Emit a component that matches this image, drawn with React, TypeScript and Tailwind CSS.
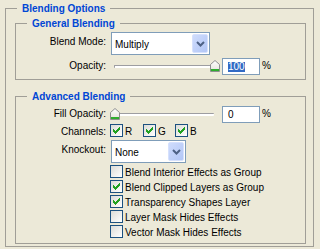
import React from "react";

const groupBox = "m-0 min-w-0 border border-[#a09e97] p-0";
const legendCls = "ml-[11px] px-[5px] font-bold text-[#0046d5]";

function CheckMark() {
  // classic 7x7 xp check, drawn pixel by pixel
  return (
    <svg width="11" height="11" viewBox="0 0 11 11" shapeRendering="crispEdges">
      <path
        transform="translate(2,2)"
        fill="#21a121"
        d="M6 0h1v1h-1z M5 1h2v1h-2z M0 2h1v1h-1z M4 2h3v1h-3z M0 3h2v1h-2z M3 3h3v1h-3z M0 4h5v1h-5z M1 5h3v1h-3z M2 6h1v1h-1z"
      />
    </svg>
  );
}

function CheckBox({ checked }: { checked: boolean }) {
  return (
    <span className="flex h-[13px] w-[13px] shrink-0 border border-[#1c5180] bg-gradient-to-br from-[#dcdcd7] to-white">
      {checked && <CheckMark />}
    </span>
  );
}

function DropDown({ value, width }: { value: string; width: string }) {
  return (
    <div className={`flex h-[23px] border border-[#7f9db9] bg-white ${width}`}>
      <div className="flex-1 pl-[3px] leading-[23px]">{value}</div>
      <div className="m-[1px] flex w-[16px] items-center justify-center rounded-[2px] border border-[#d6e1fd] bg-gradient-to-br from-[#cfdcfc] to-[#b2c6f6]">
        <svg width="9" height="6" viewBox="0 0 9 6">
          <polyline points="1,1 4.5,4.5 8,1" fill="none" stroke="#4d6185" strokeWidth="2" />
        </svg>
      </div>
    </div>
  );
}

function Slider({ value }: { value: number }) {
  return (
    <div className="relative ml-[4px] h-[17px] w-[110px]">
      <div className="absolute left-[4px] top-[7px] h-[3px] w-[100px] rounded-[1px] border-t border-l border-[#9d9da1] bg-white" />
      <svg
        className="absolute top-[2px]"
        style={{ left: value }}
        width="10"
        height="12"
        viewBox="0 0 10 12"
      >
        <defs>
          <linearGradient id={`thumb${value}`} x1="0" y1="0" x2="0" y2="1">
            <stop offset="0" stopColor="#ffffff" />
            <stop offset="1" stopColor="#e3e2da" />
          </linearGradient>
        </defs>
        <polygon
          points="0.5,11.5 0.5,4.5 5,0.5 9.5,4.5 9.5,11.5"
          fill={`url(#thumb${value})`}
          stroke="#8e8f8f"
        />
        <rect x="1" y="9" width="8" height="2" fill="#2fae2f" />
      </svg>
    </div>
  );
}

function NumberBox({ value, selected }: { value: string; selected?: boolean }) {
  return (
    <div className="ml-[2px] flex h-[17px] w-[38px] items-start border border-[#7f9db9] bg-white pl-[5px] pt-[3px]">
      <span
        className={`inline-block h-[10px] leading-[10px] ${
          selected ? "bg-[#316ac5] text-white" : ""
        }`}
      >
        {value}
      </span>
    </div>
  );
}

function Label({ text, lh }: { text: string; lh: string }) {
  return <div className={`w-[90px] shrink-0 text-right ${lh}`}>{text}</div>;
}

export default function App() {
  const options = [
    { label: "Blend Interior Effects as Group", checked: false },
    { label: "Blend Clipped Layers as Group", checked: true },
    { label: "Transparency Shapes Layer", checked: true },
    { label: "Layer Mask Hides Effects", checked: false },
    { label: "Vector Mask Hides Effects", checked: false },
  ];

  return (
    <div className="h-[249px] w-[320px] overflow-hidden bg-[#ece9d8] pl-[5px] pr-[6px] font-['Liberation_Sans',Arial,sans-serif] text-[10px] text-black">
      <fieldset className={groupBox}>
        <legend className={`${legendCls} leading-[17px]`}>Blending Options</legend>
        <div className="pb-[2px] pl-[9px] pr-[7px]">
          {/* General Blending */}
          <fieldset className={groupBox}>
            <legend className={`${legendCls} leading-[13px]`}>General Blending</legend>
            <div className="pb-[4px]">
              <div className="mt-[2px] flex h-[23px]">
                <Label text="Blend Mode:" lh="leading-[19px]" />
                <div className="ml-[5px]">
                  <DropDown value="Multiply" width="w-[99px]" />
                </div>
              </div>
              <div className="mt-[3px] flex h-[17px]">
                <Label text="Opacity:" lh="leading-[15px]" />
                <Slider value={100} />
                <NumberBox value="100" selected />
                <span className="ml-[2px] leading-[15px]">%</span>
              </div>
            </div>
          </fieldset>

          {/* Advanced Blending */}
          <fieldset className={`${groupBox} mt-[10px]`}>
            <legend className={`${legendCls} leading-[13px]`}>Advanced Blending</legend>
            <div className="pb-[3px]">
              <div className="mt-[3px] flex h-[17px]">
                <Label text="Fill Opacity:" lh="leading-[15px]" />
                <Slider value={0} />
                <NumberBox value="0" />
                <span className="ml-[2px] leading-[15px]">%</span>
              </div>
              <div className="mt-[1px] flex h-[15px]">
                <Label text="Channels:" lh="leading-[15px]" />
                <div className="ml-[4px] flex">
                  {["R", "G", "B"].map((c, i) => (
                    <div key={c} className={`flex ${i === 0 ? "w-[33px]" : "w-[32px]"}`}>
                      <CheckBox checked />
                      <span className="ml-[2px] leading-[15px]">{c}</span>
                    </div>
                  ))}
                </div>
              </div>
              <div className="mt-[1px] flex h-[23px]">
                <Label text="Knockout:" lh="leading-[19px]" />
                <div className="ml-[5px]">
                  <DropDown value="None" width="w-[75px]" />
                </div>
              </div>
              <div className="ml-[94px] mt-[2px] flex flex-col">
                {options.map((o) => (
                  <div key={o.label} className="flex h-[15px] whitespace-nowrap">
                    <CheckBox checked={o.checked} />
                    <span className="ml-[2px] leading-[15px]">{o.label}</span>
                  </div>
                ))}
              </div>
            </div>
          </fieldset>
        </div>
      </fieldset>
    </div>
  );
}
